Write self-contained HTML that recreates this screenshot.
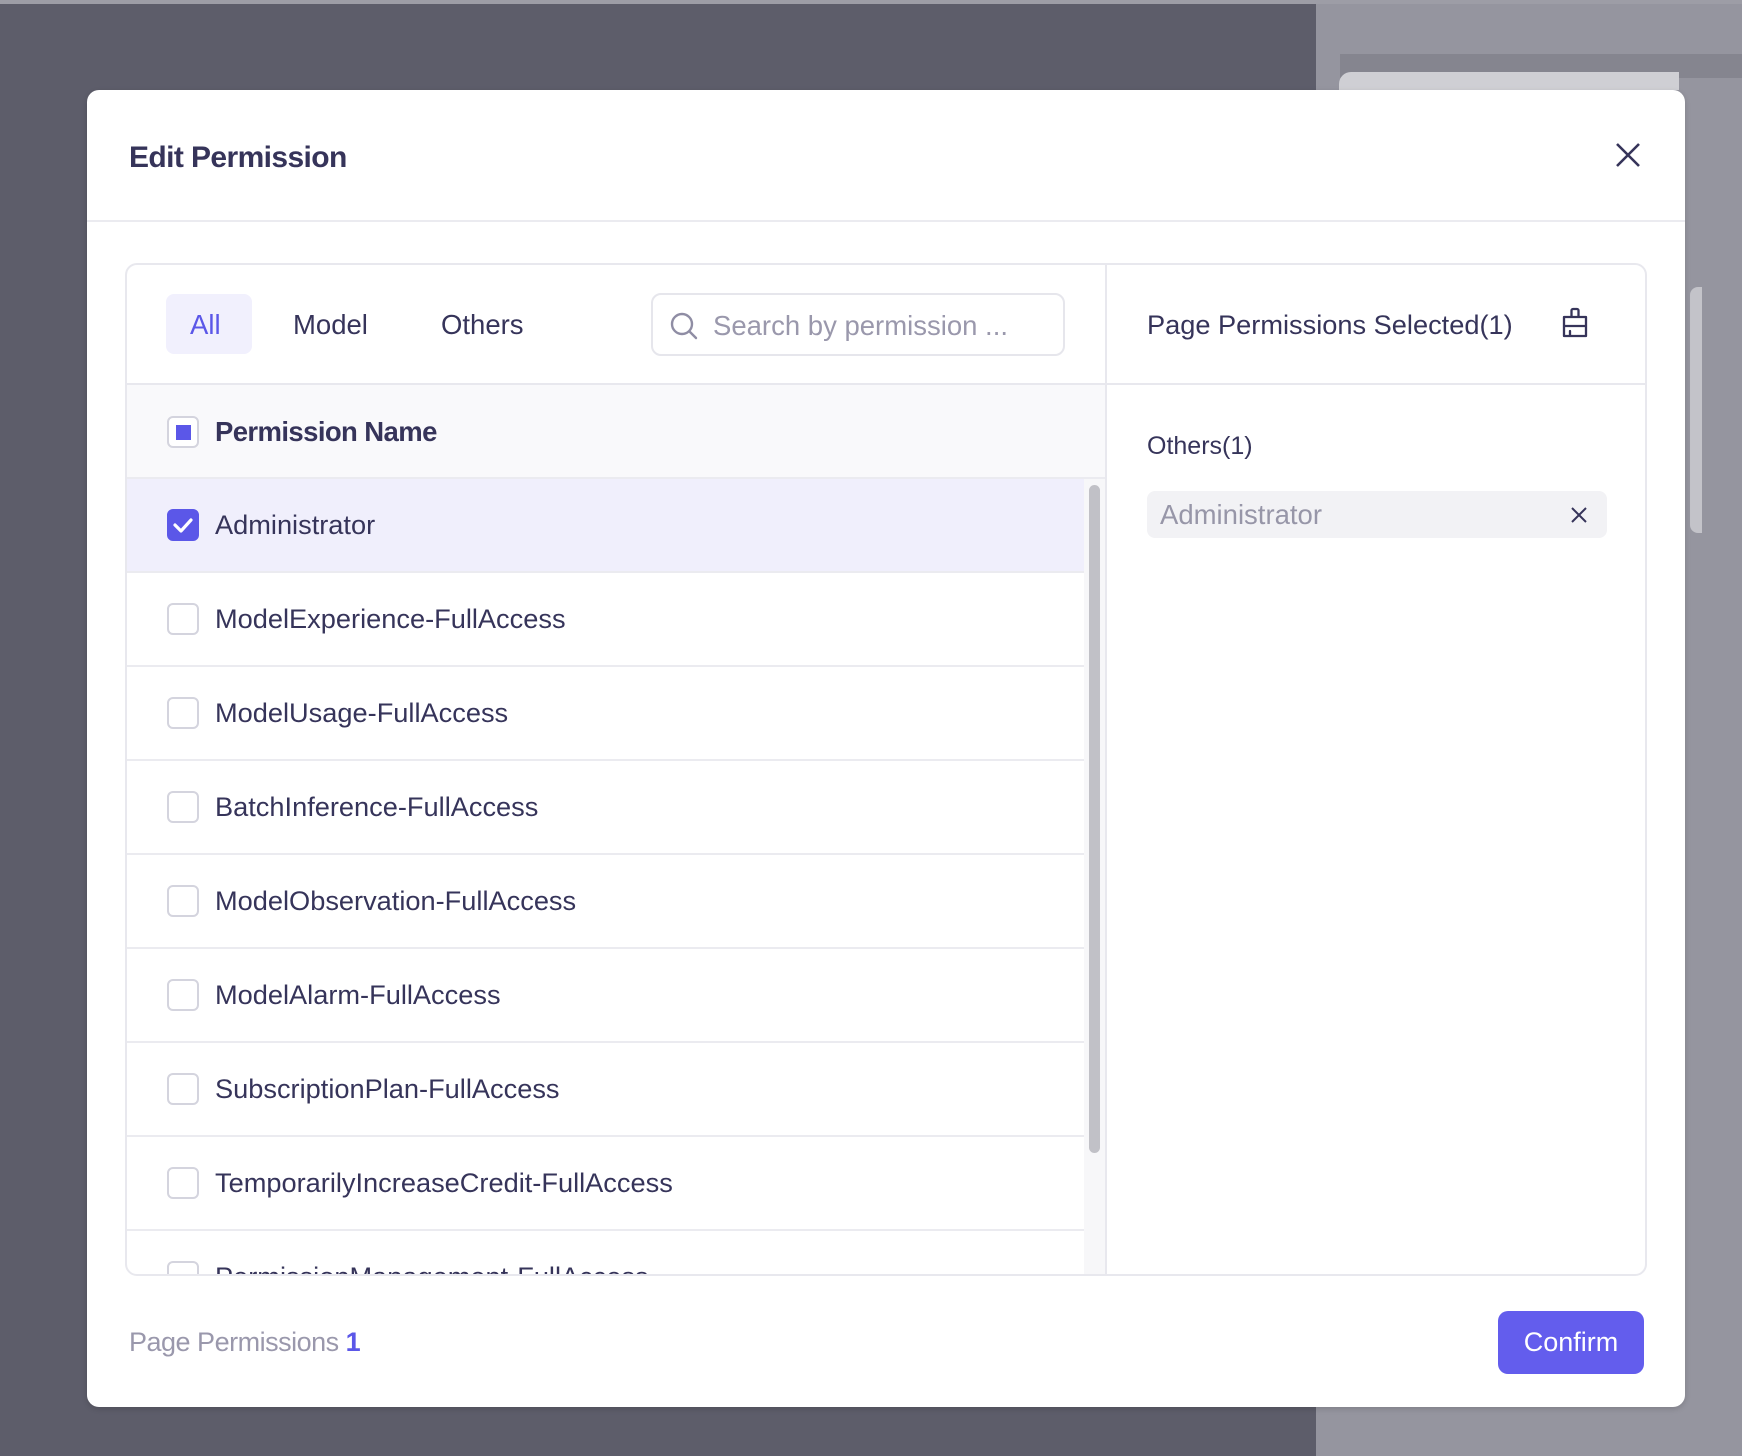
<!DOCTYPE html>
<html><head><meta charset="utf-8"><style>
*{box-sizing:border-box;margin:0;padding:0}
body{width:1742px;height:1456px;overflow:hidden;position:relative;background:#5d5d6a;font-family:"Liberation Sans",sans-serif;color:#36345a}
.abs{position:absolute}
.row{position:absolute;left:126px;width:957px;height:94px;border-bottom:2px solid #ebebf0;display:flex;align-items:center}
.cb{position:absolute;left:40px;width:32px;height:32px;border:2px solid #d4d4de;border-radius:6px;background:#fff}
.lbl{position:absolute;left:88px;font-size:27.2px;letter-spacing:0}
</style></head><body>
<div class="abs" style="left:1316px;top:0;width:426px;height:1456px;background:#95959f"></div>
<div class="abs" style="left:0;top:0;width:1742px;height:4px;background:#9d9da6"></div>
<div class="abs" style="left:1340px;top:54px;width:402px;height:24px;background:#85858f"></div>
<div class="abs" style="left:1339px;top:72px;width:340px;height:18px;background:#cfcfd4;border-radius:12px 0 0 0"></div>
<div class="abs" style="left:1690px;top:287px;width:12px;height:246px;background:#c3c3c9;border-radius:8px 0 0 8px"></div>

<div class="abs" style="left:87px;top:90px;width:1598px;height:1317px;background:#fff;border-radius:12px;box-shadow:0 2px 6px rgba(0,0,0,.15)">
  <div class="abs" style="left:42px;top:51px;font-size:30px;font-weight:bold;letter-spacing:-0.6px;color:#36345a">Edit Permission</div>
  <svg class="abs" style="left:1528px;top:52px" width="26" height="26" viewBox="0 0 26 26"><path d="M2 2L24 24M24 2L2 24" stroke="#36345a" stroke-width="2.6"/></svg>
  <div class="abs" style="left:0;top:130px;width:1598px;height:2px;background:#ebebf0"></div>

  <div class="abs" style="left:38px;top:173px;width:1522px;height:1013px;border:2px solid #e8e8ee;border-radius:12px;overflow:hidden">
    <div class="abs" style="left:39px;top:29px;width:86px;height:60px;background:#f1f0fd;border-radius:8px"></div>
    <div class="abs" style="left:63px;top:44px;font-size:27.5px;color:#5b57e8">All</div>
    <div class="abs" style="left:166px;top:44px;font-size:27.5px">Model</div>
    <div class="abs" style="left:314px;top:44px;font-size:27.5px">Others</div>
    <div class="abs" style="left:524px;top:28px;width:414px;height:63px;border:2px solid #e6e6ec;border-radius:10px">
      <svg class="abs" style="left:16px;top:16px" width="30" height="30" viewBox="0 0 30 30"><circle cx="13" cy="13" r="10" fill="none" stroke="#8f8da4" stroke-width="2.4"/><path d="M20.5 20.5L27 27" stroke="#8f8da4" stroke-width="2.4" stroke-linecap="round"/></svg>
      <div class="abs" style="left:60px;top:15px;font-size:27.5px;color:#9a98ac">Search by permission ...</div>
    </div>
    <div class="abs" style="left:978px;top:0;width:2px;height:1013px;background:#e8e8ee"></div>
    <div class="abs" style="left:0;top:118px;width:1522px;height:2px;background:#e8e8ee"></div>
    <div class="abs" style="left:0;top:120px;width:978px;height:94px;background:#f9f9fb;border-bottom:2px solid #ebebf0"></div>
    <div class="abs" style="left:40px;top:151px;width:32px;height:32px;border:2px solid #d4d4de;border-radius:6px;background:#fff"><div class="abs" style="left:7px;top:7px;width:15px;height:15px;background:#5b57e8"></div></div>
    <div class="abs" style="left:88px;top:151px;font-size:27.5px;font-weight:bold;letter-spacing:-0.6px">Permission Name</div>

    <div class="abs" style="left:0;top:214px;width:957px;height:799px;overflow:hidden">
      <div class="row" style="left:0;top:0;background:#f0effc"><div class="cb" style="background:#5b57e8;border-color:#5b57e8"><svg width="28" height="28" viewBox="0 0 28 28" style="position:absolute;left:0;top:0"><path d="M6 14l6 6 10-11" fill="none" stroke="#fff" stroke-width="3.2" stroke-linecap="round" stroke-linejoin="round"/></svg></div><div class="lbl">Administrator</div></div>
      <div class="row" style="left:0;top:94px"><div class="cb"></div><div class="lbl">ModelExperience-FullAccess</div></div>
      <div class="row" style="left:0;top:188px"><div class="cb"></div><div class="lbl">ModelUsage-FullAccess</div></div>
      <div class="row" style="left:0;top:282px"><div class="cb"></div><div class="lbl">BatchInference-FullAccess</div></div>
      <div class="row" style="left:0;top:376px"><div class="cb"></div><div class="lbl">ModelObservation-FullAccess</div></div>
      <div class="row" style="left:0;top:470px"><div class="cb"></div><div class="lbl">ModelAlarm-FullAccess</div></div>
      <div class="row" style="left:0;top:564px"><div class="cb"></div><div class="lbl">SubscriptionPlan-FullAccess</div></div>
      <div class="row" style="left:0;top:658px"><div class="cb"></div><div class="lbl">TemporarilyIncreaseCredit-FullAccess</div></div>
      <div class="row" style="left:0;top:752px"><div class="cb"></div><div class="lbl">PermissionManagement-FullAccess</div></div>
    </div>
    <div class="abs" style="left:957px;top:214px;width:21px;height:799px;background:#f7f7f9"></div>
    <div class="abs" style="left:962px;top:220px;width:11px;height:668px;background:#c1c1c7;border-radius:6px"></div>

    <div class="abs" style="left:1020px;top:44px;font-size:27.2px">Page Permissions Selected(1)</div>
    <svg class="abs" style="left:1434px;top:42px" width="28" height="32" viewBox="0 0 28 32"><path d="M10.5 10V3.5a1.5 1.5 0 0 1 1.5-1.5h4a1.5 1.5 0 0 1 1.5 1.5V10M3 10h22v9H3zM3 19v10h22V19M9 29v-5" fill="none" stroke="#36345a" stroke-width="2.3" stroke-linejoin="round" stroke-linecap="round"/></svg>
    <div class="abs" style="left:1020px;top:167px;font-size:25px">Others(1)</div>
    <div class="abs" style="left:1020px;top:226px;width:460px;height:47px;background:#f2f2f5;border-radius:8px">
      <div class="abs" style="left:13px;top:8px;font-size:27.5px;color:#9796a8">Administrator</div>
      <svg class="abs" style="left:424px;top:16px" width="16" height="16" viewBox="0 0 16 16"><path d="M1 1L15 15M15 1L1 15" stroke="#36345a" stroke-width="2"/></svg>
    </div>
  </div>

  <div class="abs" style="left:42px;top:1237px;font-size:27px;color:#9a98ac;letter-spacing:-0.5px">Page Permissions <span style="color:#5b57e8;font-weight:bold">1</span></div>
  <div class="abs" style="left:1411px;top:1221px;width:146px;height:63px;background:#635ded;border-radius:10px;color:#fff;font-size:27px;text-align:center;line-height:63px">Confirm</div>
</div>
</body></html>
